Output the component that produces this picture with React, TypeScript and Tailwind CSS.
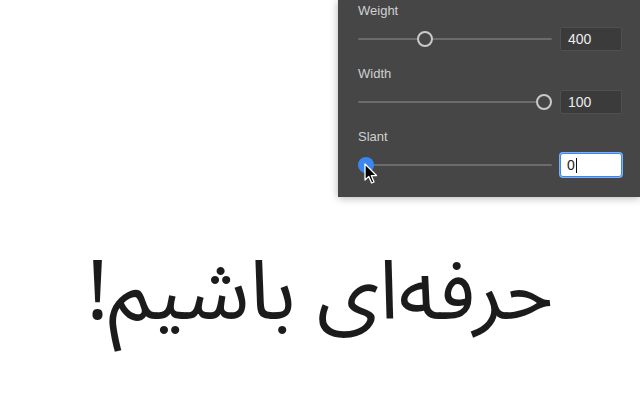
import React from "react";

type Axis = {
  label: string;
  value: string;
  thumb: string; // left offset class for the thumb inside the track
  active?: boolean;
};

const axes: Axis[] = [
  { label: "Weight", value: "400", thumb: "left-[59px]" },
  { label: "Width", value: "100", thumb: "left-[178px]" },
  { label: "Slant", value: "0", thumb: "left-0", active: true },
];

const Cursor = () => (
  <svg
    className="absolute left-[-1px] top-[-1px] pointer-events-none"
    width="14"
    height="22"
    viewBox="0 0 14 22"
  >
    <path
      d="M1 1 L1 17 L4.8 13.4 L7.6 20 L10 19 L7.3 12.6 L12.5 12.5 Z"
      fill="#000"
      stroke="#fff"
      strokeWidth="1.3"
      strokeLinejoin="round"
    />
  </svg>
);

const AxisRow = ({ axis }: { axis: Axis }) => (
  <div className="flex flex-col gap-2">
    <span className="text-[13px] leading-4 text-[#d0d0d0]">{axis.label}</span>
    <div className="flex items-center gap-2">
      {/* slider */}
      <div className="relative h-6 w-[194px] flex items-center">
        <div className="h-[2px] w-full bg-[#6b6b6b] rounded-full" />
        <div className={`absolute top-[4px] ${axis.thumb} w-[16px] h-[16px]`}>
          {axis.active ? (
            <div className="relative w-full h-full rounded-full bg-[#3b87f0]">
              <div className="absolute left-[7px] top-[7px]">
                <Cursor />
              </div>
            </div>
          ) : (
            <div className="w-full h-full rounded-full border-2 border-[#c9c9c9] bg-[#464646]" />
          )}
        </div>
      </div>
      {/* number field */}
      {axis.active ? (
        <div className="h-6 w-[62px] rounded-[3px] bg-white border border-[#3b87f0] shadow-[0_0_0_1px_#7fb0f5] flex items-center px-[6px] text-[14px] text-[#222]">
          {axis.value}
          <span className="inline-block w-px h-[15px] bg-[#111] ml-px" />
        </div>
      ) : (
        <div className="h-6 w-[62px] rounded-[2px] bg-[#3b3b3b] border border-[#505050] flex items-center px-[7px] text-[14px] text-[#ececec]">
          {axis.value}
        </div>
      )}
    </div>
  </div>
);

export default function App() {
  return (
    <div className="w-[640px] h-[400px] overflow-hidden bg-white flex flex-col font-['Liberation_Sans',sans-serif]">
      <div className="flex justify-end">
        <div className="w-[302px] h-[197px] bg-[#464646] pl-5 pt-[3px] flex flex-col gap-[15px] shadow-[0_1px_8px_rgba(0,0,0,0.3)]">
          {axes.map((axis) => (
            <AxisRow key={axis.label} axis={axis} />
          ))}
        </div>
      </div>
      <div className="flex-1 flex items-start justify-center pt-[46px]">
        <p
          dir="rtl"
          className="text-[82px] leading-[100px] text-[#1b1b1b] font-['Noto_Sans_Arabic','Noto_Naskh_Arabic','DejaVu_Sans',sans-serif]"
        >
          حرفه‌ای باشیم!
        </p>
      </div>
    </div>
  );
}
